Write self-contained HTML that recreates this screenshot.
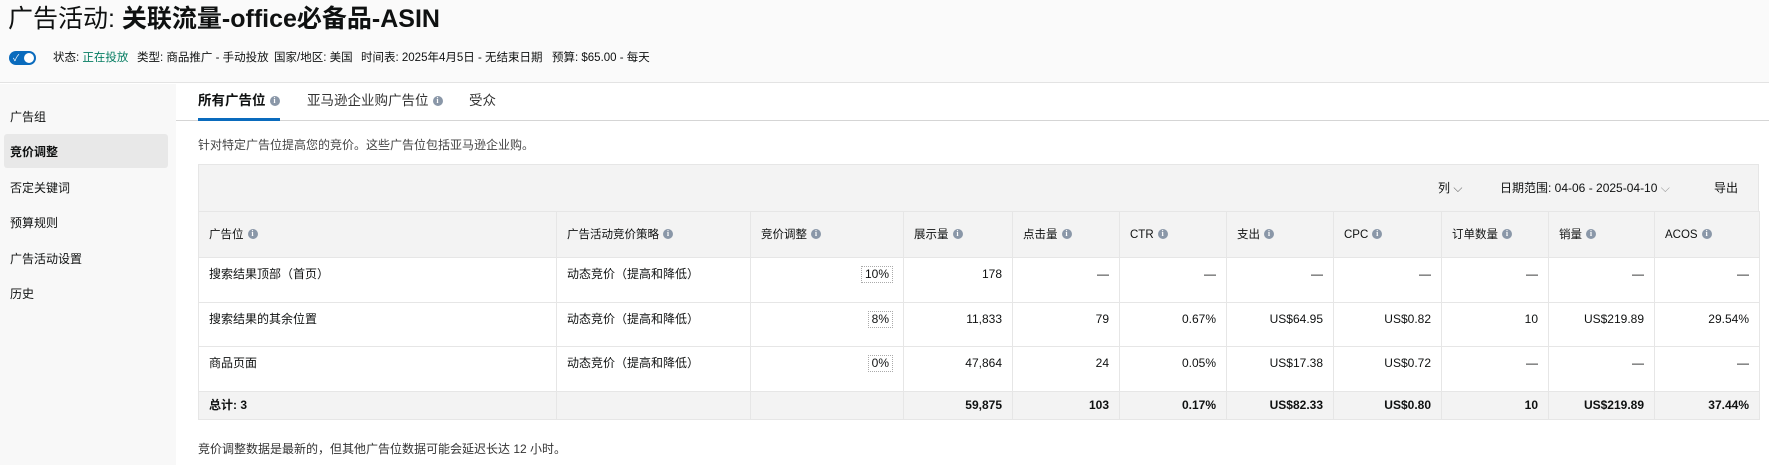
<!DOCTYPE html>
<html><head><meta charset="utf-8"><style>
*{margin:0;padding:0;box-sizing:border-box}
body{width:1769px;height:465px;overflow:hidden;background:#fff;font-family:"Liberation Sans","Noto Sans CJK SC",sans-serif;color:#0f1111;font-size:12px;position:relative}
.a{position:absolute;white-space:nowrap}
.hdr{position:absolute;left:0;top:0;width:1769px;height:83px;background:#fafafa;border-bottom:1px solid #e3e3e3}
.side{position:absolute;left:0;top:84px;width:176px;height:381px;background:#f8f8f8}
.i{display:inline-block;width:10px;height:10px;border-radius:50%;background:#8a97a8;color:#fff;font-size:8px;line-height:10px;text-align:center;font-weight:bold;vertical-align:middle;margin-left:4px;font-family:"Liberation Serif",serif}
table{position:absolute;left:198px;top:211px;width:1561px;border-collapse:collapse;table-layout:fixed}
td{border:1px solid #e6e6e6;padding:0 10px;vertical-align:top;font-size:12px;line-height:16px}
tr.h td{background:#f3f3f3;height:46px;vertical-align:middle;font-size:11.5px}
tr.r td{height:44.5px;padding-top:8px}
tr.t td{background:#f3f3f3;height:28px;vertical-align:middle;font-weight:bold}
.n{text-align:right}
.bx{display:inline-block;border:1px dotted #aaa;padding:0 3px;line-height:15px}
</style></head><body>
<div class="hdr"></div>
<div class="a" style="left:8px;top:4px;font-size:25px;line-height:30px">广告活动: <b>关联流量-office必备品-ASIN</b></div>
<div class="a" style="left:9px;top:51px;width:27px;height:14px;border-radius:7px;background:#0a6bbd"><span style="position:absolute;right:2px;top:2px;width:10px;height:10px;border-radius:50%;background:#fff"></span><span style="position:absolute;left:4px;top:0;color:#fff;font-size:9px;line-height:14px">✓</span></div>
<div class="a" style="left:53px;top:50px;font-size:11.5px;line-height:16px">状态: <span style="color:#067d62">正在投放</span></div>
<div class="a" style="left:137px;top:50px;font-size:11.5px;line-height:16px">类型: 商品推广 - 手动投放</div>
<div class="a" style="left:274px;top:50px;font-size:11.5px;line-height:16px">国家/地区: 美国</div>
<div class="a" style="left:361px;top:50px;font-size:11.5px;line-height:16px">时间表: 2025年4月5日 - 无结束日期</div>
<div class="a" style="left:552px;top:50px;font-size:11.5px;line-height:16px">预算: $65.00 - 每天</div>
<div class="side"></div>
<div class="a" style="left:4px;top:134px;width:164px;height:34px;background:#e8e8e8;border-radius:3px"></div>
<div class="a" style="left:10px;top:109px;line-height:16px">广告组</div>
<div class="a" style="left:10px;top:144px;line-height:16px;font-weight:bold">竞价调整</div>
<div class="a" style="left:10px;top:180px;line-height:16px">否定关键词</div>
<div class="a" style="left:10px;top:215px;line-height:16px">预算规则</div>
<div class="a" style="left:10px;top:251px;line-height:16px">广告活动设置</div>
<div class="a" style="left:10px;top:286px;line-height:16px">历史</div>
<div class="a" style="left:176px;top:120px;width:1593px;height:1px;background:#d5d5d5"></div>
<div class="a" style="left:198px;top:92px;font-size:13.5px;font-weight:bold;line-height:18px">所有广告位<span class="i">i</span></div>
<div class="a" style="left:198px;top:118px;width:82px;height:3px;background:#0a6bbd"></div>
<div class="a" style="left:307px;top:92px;font-size:13.5px;line-height:18px;color:#333">亚马逊企业购广告位<span class="i">i</span></div>
<div class="a" style="left:469px;top:92px;font-size:13.5px;line-height:18px;color:#333">受众</div>
<div class="a" style="left:198px;top:137px;line-height:16px;color:#444">针对特定广告位提高您的竞价。这些广告位包括亚马逊企业购。</div>
<div class="a" style="left:198px;top:164px;width:1561px;height:48px;background:#f3f3f3;border:1px solid #e6e6e6;border-bottom:none"></div>
<div class="a" style="left:1438px;top:180px;line-height:16px">列 <span style="color:#666">⌵</span></div>
<div class="a" style="left:1500px;top:180px;line-height:16px">日期范围: 04-06 - 2025-04-10 <span style="color:#999">⌵</span></div>
<div class="a" style="left:1714px;top:180px;line-height:16px">导出</div>
<table>
<colgroup><col style="width:358px"><col style="width:194px"><col style="width:153px"><col style="width:109px"><col style="width:107px"><col style="width:107px"><col style="width:107px"><col style="width:108px"><col style="width:107px"><col style="width:106px"><col style="width:105px"></colgroup>
<tr class="h"><td>广告位<span class="i">i</span></td><td>广告活动竞价策略<span class="i">i</span></td><td>竞价调整<span class="i">i</span></td><td>展示量<span class="i">i</span></td><td>点击量<span class="i">i</span></td><td>CTR<span class="i">i</span></td><td>支出<span class="i">i</span></td><td>CPC<span class="i">i</span></td><td>订单数量<span class="i">i</span></td><td>销量<span class="i">i</span></td><td>ACOS<span class="i">i</span></td></tr>
<tr class="r"><td>搜索结果顶部（首页）</td><td>动态竞价（提高和降低）</td><td class="n"><span class="bx">10%</span></td><td class="n">178</td><td class="n">—</td><td class="n">—</td><td class="n">—</td><td class="n">—</td><td class="n">—</td><td class="n">—</td><td class="n">—</td></tr>
<tr class="r"><td>搜索结果的其余位置</td><td>动态竞价（提高和降低）</td><td class="n"><span class="bx">8%</span></td><td class="n">11,833</td><td class="n">79</td><td class="n">0.67%</td><td class="n">US$64.95</td><td class="n">US$0.82</td><td class="n">10</td><td class="n">US$219.89</td><td class="n">29.54%</td></tr>
<tr class="r"><td>商品页面</td><td>动态竞价（提高和降低）</td><td class="n"><span class="bx">0%</span></td><td class="n">47,864</td><td class="n">24</td><td class="n">0.05%</td><td class="n">US$17.38</td><td class="n">US$0.72</td><td class="n">—</td><td class="n">—</td><td class="n">—</td></tr>
<tr class="t"><td>总计: 3</td><td></td><td></td><td class="n">59,875</td><td class="n">103</td><td class="n">0.17%</td><td class="n">US$82.33</td><td class="n">US$0.80</td><td class="n">10</td><td class="n">US$219.89</td><td class="n">37.44%</td></tr>
</table>
<div class="a" style="left:198px;top:441px;line-height:16px;color:#333">竞价调整数据是最新的，但其他广告位数据可能会延迟长达 12 小时。</div>
</body></html>
